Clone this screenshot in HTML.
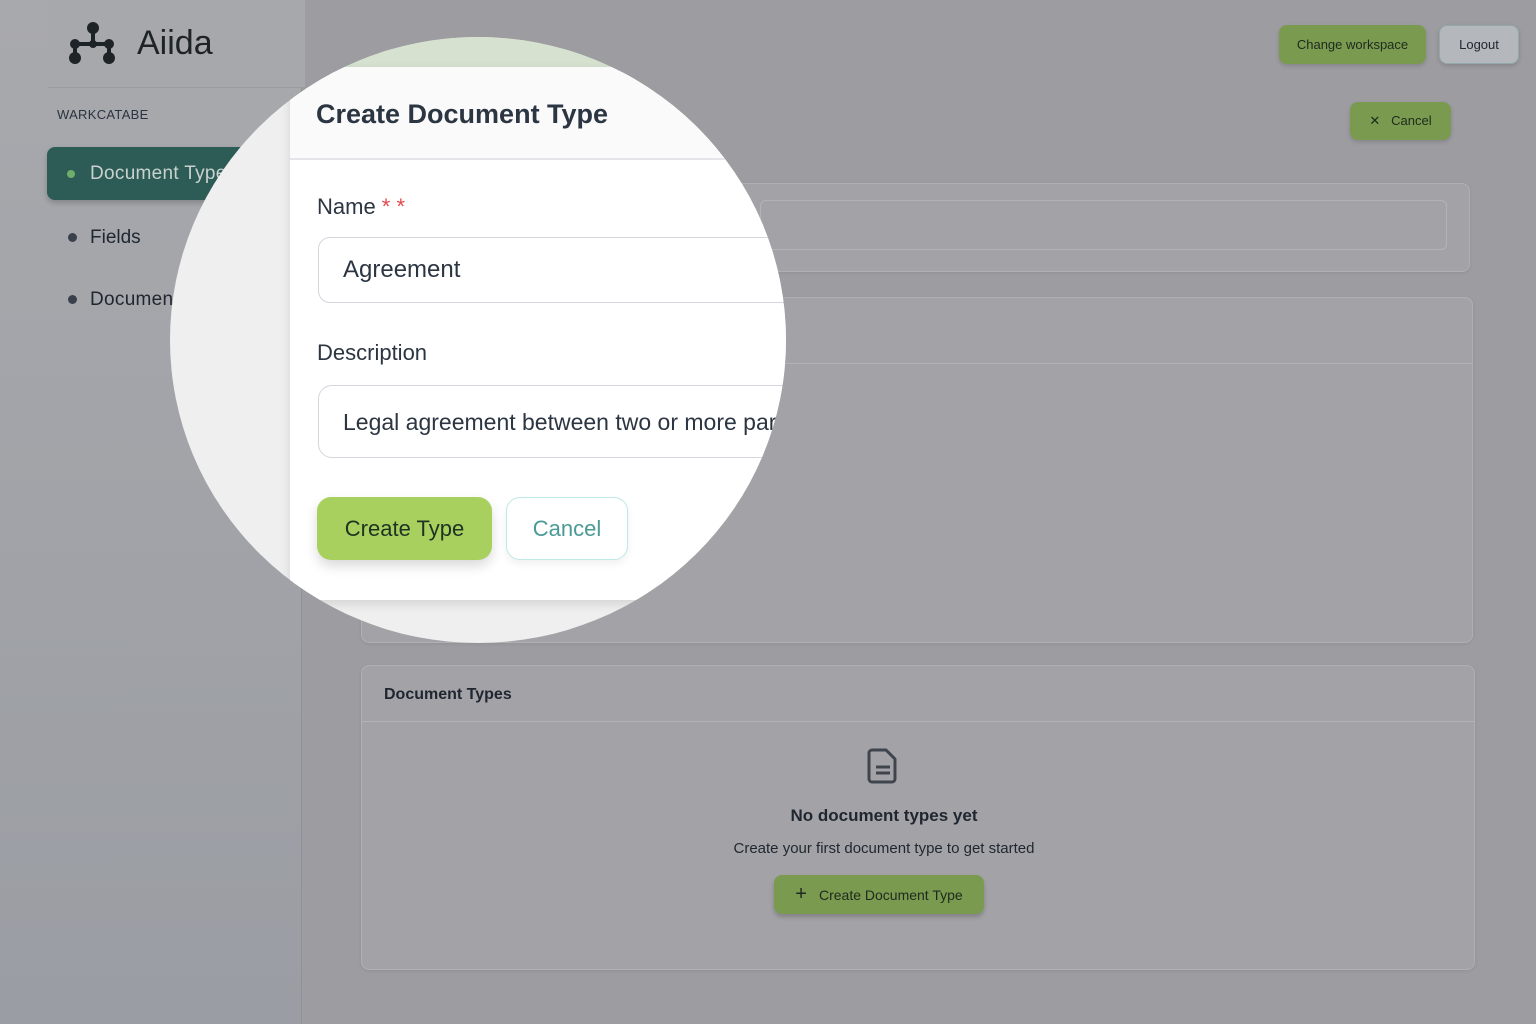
<!DOCTYPE html>
<html><head><meta charset="utf-8"><style>
*{box-sizing:border-box;margin:0;padding:0}
body{width:1536px;height:1024px;overflow:hidden;background:#9c9ca1;font-family:"Liberation Sans","DejaVu Sans",sans-serif;position:relative;color:#1f2630}
.abs{position:absolute}
.side{left:0;top:0;width:302px;height:1024px;background:linear-gradient(180deg,#a8a9ad,#9a9da3);border-right:1px solid #8f9196}
.logo{left:48px;top:0;width:257px;height:88px;border-bottom:1px solid #9a9ca0;background:#a7a8ac}
.card{background:#a3a3a7;border:1px solid #b0b0b3;border-radius:8px;box-shadow:0 1px 3px rgba(0,0,0,.08)}
.btn{border-radius:8px;font-size:13px;display:flex;align-items:center;justify-content:center}
.circle{left:170px;top:37px;width:616px;height:606px;border-radius:50%;overflow:hidden;background:#efefef}
.in{position:absolute;left:-170px;top:-37px;width:1536px;height:1024px}
</style></head><body>
<div class="abs side"></div>
<div class="abs logo"></div>
<svg class="abs" style="left:66px;top:20px" width="52" height="46" viewBox="0 0 52 46">
<g stroke="#1e2328" stroke-width="4" fill="#1e2328"><line x1="9" y1="24" x2="43" y2="24"/><line x1="27" y1="8" x2="27" y2="24"/><line x1="9" y1="24" x2="9" y2="38"/><line x1="43" y1="24" x2="43" y2="38"/></g>
<g fill="#1e2328"><circle cx="27" cy="8" r="6"/><circle cx="9" cy="24" r="5"/><circle cx="43" cy="24" r="5"/><circle cx="27" cy="24" r="4"/><circle cx="9" cy="38" r="6"/><circle cx="43" cy="38" r="6"/></g></svg>
<div class="abs" style="left:137px;top:24px;font-size:34px;color:#1e2328">Aiida</div>
<div class="abs" style="left:57px;top:107px;font-size:13px;color:#2b3240;letter-spacing:.3px">WARKCATABE</div>
<div class="abs" style="left:47px;top:147px;width:220px;height:53px;background:#2d5b55;border-radius:8px;box-shadow:0 3px 6px rgba(0,0,0,.2)"></div>
<div class="abs" style="left:67px;top:170px;width:8px;height:8px;border-radius:50%;background:#6fae6a"></div>
<div class="abs" style="left:90px;top:163px;font-size:19px;color:#c9d2cf;letter-spacing:.3px">Document Types</div>
<div class="abs" style="left:68px;top:233px;width:9px;height:9px;border-radius:50%;background:#3a414c"></div>
<div class="abs" style="left:90px;top:227px;font-size:19px;color:#1f2630">Fields</div>
<div class="abs" style="left:68px;top:295px;width:9px;height:9px;border-radius:50%;background:#3a414c"></div>
<div class="abs" style="left:90px;top:289px;font-size:19px;color:#1f2630;letter-spacing:.3px">Documents</div>

<div class="abs btn" style="left:1279px;top:25px;width:147px;height:39px;background:#7a9a50;color:#1e2a1e;box-shadow:0 2px 4px rgba(0,0,0,.15)">Change workspace</div>
<div class="abs btn" style="left:1439px;top:25px;width:80px;height:39px;background:#b4b7bb;border:1px solid #93a8ac;color:#1f2630;box-shadow:0 2px 4px rgba(0,0,0,.15)">Logout</div>
<div class="abs btn" style="left:1350px;top:102px;width:101px;height:38px;background:#7a9a50;color:#1e2a1e;box-shadow:0 2px 4px rgba(0,0,0,.15)">✕&nbsp;&nbsp;&nbsp;Cancel</div>

<div class="abs card" style="left:361px;top:183px;width:1109px;height:89px"></div>
<div class="abs" style="left:760px;top:200px;width:687px;height:50px;border:1px solid #b3b3b6;border-radius:6px"></div>
<div class="abs card" style="left:361px;top:297px;width:1112px;height:346px"></div>
<div class="abs" style="left:362px;top:363px;width:1110px;height:1px;background:#b3b3b6"></div>
<div class="abs card" style="left:361px;top:665px;width:1114px;height:305px"></div>
<div class="abs" style="left:362px;top:721px;width:1112px;height:1px;background:#b3b3b6"></div>
<div class="abs" style="left:384px;top:686px;font-size:16px;font-weight:bold;color:#1f2630">Document Types</div>
<svg class="abs" style="left:866px;top:747px" width="34" height="38" viewBox="0 0 34 38"><path d="M6 3h14l9 9v20a3 3 0 0 1-3 3H6a3 3 0 0 1-3-3V6a3 3 0 0 1 3-3z" fill="none" stroke="#3f454d" stroke-width="3" stroke-linejoin="round"/><line x1="10" y1="20" x2="24" y2="20" stroke="#3f454d" stroke-width="3"/><line x1="10" y1="26" x2="24" y2="26" stroke="#3f454d" stroke-width="3"/></svg>
<div class="abs" style="left:680px;top:806px;width:408px;text-align:center;font-size:17px;font-weight:bold;color:#1f2630">No document types yet</div>
<div class="abs" style="left:680px;top:840px;width:408px;text-align:center;font-size:15px;color:#1f2630">Create your first document type to get started</div>
<div class="abs btn" style="left:774px;top:875px;width:210px;height:39px;background:#7a9a50;color:#1e2a1e;font-size:14px;box-shadow:0 3px 5px rgba(0,0,0,.2)"><span style="font-size:20px;margin-right:12px">+</span>Create Document Type</div>

<div class="abs circle"><div class="in">
<div class="abs" style="left:0;top:0;width:1536px;height:67px;background:#d6e2cf"></div>
<div class="abs" style="left:290px;top:67px;width:600px;height:533px;background:#fff;box-shadow:0 4px 10px rgba(0,0,0,.12)"></div>
<div class="abs" style="left:290px;top:67px;width:600px;height:93px;background:#fafafa;border-bottom:2px solid #e3e5e9"></div>
<div class="abs" style="left:316px;top:99px;font-size:27px;font-weight:bold;color:#2c3542">Create Document Type</div>
<div class="abs" style="left:317px;top:194px;font-size:22px;color:#2c3542">Name <span style="color:#e5484d">* *</span></div>
<div class="abs" style="left:318px;top:237px;width:600px;height:66px;border:1.5px solid #d3d6dc;border-radius:12px"></div>
<div class="abs" style="left:343px;top:256px;font-size:24px;color:#2c3542">Agreement</div>
<div class="abs" style="left:317px;top:340px;font-size:22px;color:#2c3542">Description</div>
<div class="abs" style="left:318px;top:385px;width:600px;height:73px;border:1.5px solid #d3d6dc;border-radius:14px"></div>
<div class="abs" style="left:343px;top:409px;font-size:23px;color:#2c3542;white-space:nowrap">Legal agreement between two or more parties</div>
<div class="abs btn" style="left:317px;top:497px;width:175px;height:63px;background:#a8d05e;border-radius:14px;font-size:22px;color:#1f3323;box-shadow:0 6px 12px rgba(0,0,0,.15)">Create Type</div>
<div class="abs btn" style="left:506px;top:497px;width:122px;height:63px;background:#fff;border:1.5px solid #bfe9e6;border-radius:14px;font-size:22px;color:#4a9a97;box-shadow:0 4px 8px rgba(0,0,0,.06)">Cancel</div>
</div></div>
</body></html>
